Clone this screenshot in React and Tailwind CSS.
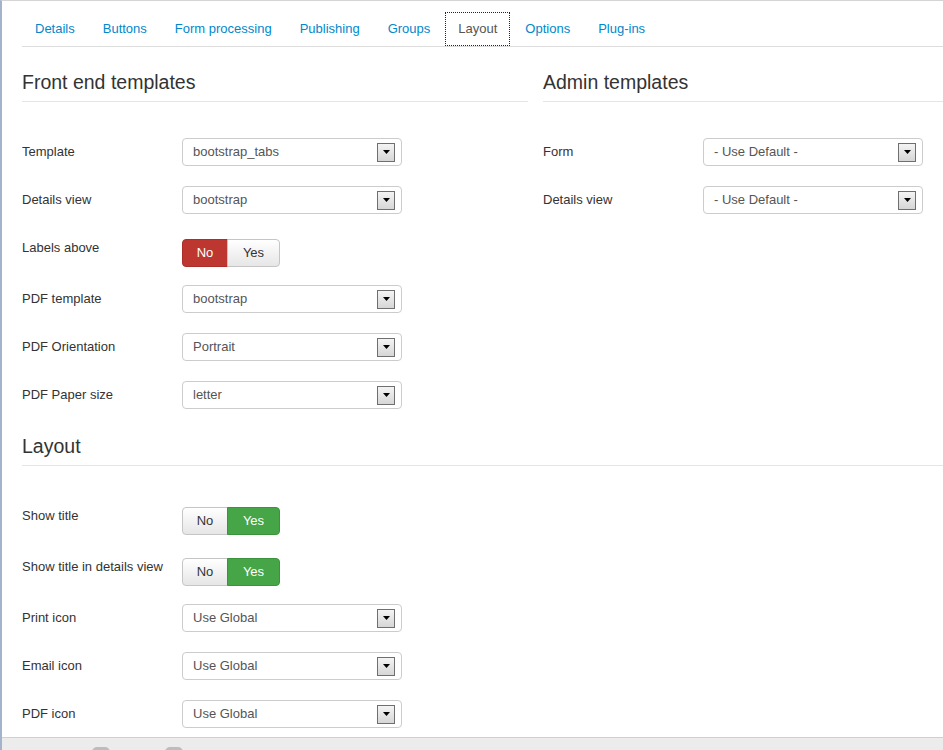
const tabs = ['Details', 'Buttons', 'Form processing', 'Publishing', 'Groups', 'Layout', 'Options', 'Plug-ins'];

function SelectBox({ value }) {
  return (
    <div className="flex h-7 w-[220px] items-center justify-between rounded border border-[#cccccc] bg-white pl-[10px] pr-[6px] text-[13px] text-[#555555]">
      <span>{value}</span>
      <span className="flex h-[19px] w-[18px] items-center justify-center border border-[#6f6f6f] bg-linear-to-b from-[#f4f4f4] to-[#d6d6d6]">
        <svg width="7" height="4" viewBox="0 0 7 4">
          <path d="M0 0h7L3.5 4z" fill="#000" />
        </svg>
      </span>
    </div>
  );
}

function Toggle({ on }) {
  const idle = 'border-[#c5c5c5] bg-linear-to-b from-white to-[#e6e6e6] text-[#333333]';
  return (
    <div className="flex h-7 text-[13px]">
      <span
        className={`flex w-[46px] items-center justify-center rounded-l border ${
          on ? idle : 'border-[#a9302a] bg-[#bd362f] text-white'
        }`}
      >
        No
      </span>
      <span
        className={`-ml-px flex w-[53px] items-center justify-center rounded-r border ${
          on ? 'border-[#3d923d] bg-[#46a546] text-white' : idle
        }`}
      >
        Yes
      </span>
    </div>
  );
}

function Row({ label, children, toggle }) {
  return (
    <div className={toggle ? 'flex h-[33px] mb-[18px]' : 'flex h-7 mb-5'}>
      <div className="w-40 shrink-0 pt-[5px] text-[13px] leading-[18px] text-[#333333]">{label}</div>
      <div className={toggle ? 'pt-[5px]' : ''}>{children}</div>
    </div>
  );
}

function Heading({ children, className }) {
  return (
    <h3 className={`border-b border-[#e5e5e5] pb-[7px] text-[19.5px] leading-6 text-[#333333] ${className}`}>
      {children}
    </h3>
  );
}

export default function App() {
  return (
    <div className="flex h-[750px] w-[943px] flex-col overflow-hidden border-t border-l-2 border-t-[#d4d4d4] border-l-[#a3b3cc] bg-white font-['Liberation_Sans',Arial,sans-serif]">
      <div className="flex-1 overflow-hidden pl-5">
        <ul className="flex border-b border-[#dddddd] pt-[11px] text-[13px]">
          {tabs.map((tab) => (
            <li key={tab} className="mr-[2px]">
              <span
                className={`block h-[34px] border px-3 py-[7px] leading-[18px] ${
                  tab === 'Layout' ? 'border-dotted border-[#222222] text-[#555555]' : 'border-transparent text-[#0088cc]'
                }`}
              >
                {tab}
              </span>
            </li>
          ))}
        </ul>

        <div className="flex gap-[15px]">
          <div className="w-[506px] shrink-0">
            <Heading className="mt-[23px]">Front end templates</Heading>
            <div className="mt-9">
              <Row label="Template"><SelectBox value="bootstrap_tabs" /></Row>
              <Row label="Details view"><SelectBox value="bootstrap" /></Row>
              <Row label="Labels above" toggle><Toggle on={false} /></Row>
              <Row label="PDF template"><SelectBox value="bootstrap" /></Row>
              <Row label="PDF Orientation"><SelectBox value="Portrait" /></Row>
              <Row label="PDF Paper size"><SelectBox value="letter" /></Row>
            </div>
          </div>
          <div className="w-[506px] shrink-0">
            <Heading className="mt-[23px]">Admin templates</Heading>
            <div className="mt-9">
              <Row label="Form"><SelectBox value="- Use Default -" /></Row>
              <Row label="Details view"><SelectBox value="- Use Default -" /></Row>
            </div>
          </div>
        </div>

        <Heading className="mt-[5px]">Layout</Heading>
        <div className="mt-9">
          <Row label="Show title" toggle><Toggle on /></Row>
          <Row label="Show title in details view" toggle><Toggle on /></Row>
          <Row label="Print icon"><SelectBox value="Use Global" /></Row>
          <Row label="Email icon"><SelectBox value="Use Global" /></Row>
          <Row label="PDF icon"><SelectBox value="Use Global" /></Row>
        </div>
      </div>

      <div className="flex h-[13px] shrink-0 overflow-hidden border-t border-[#d0d0d0] bg-[#ececec] pl-[90px] pt-[9px]">
        <span className="h-[10px] w-[18px] rounded-full bg-[#bdbdbd]" />
        <span className="ml-[55px] h-[10px] w-[18px] rounded-full bg-[#bdbdbd]" />
      </div>
    </div>
  );
}
